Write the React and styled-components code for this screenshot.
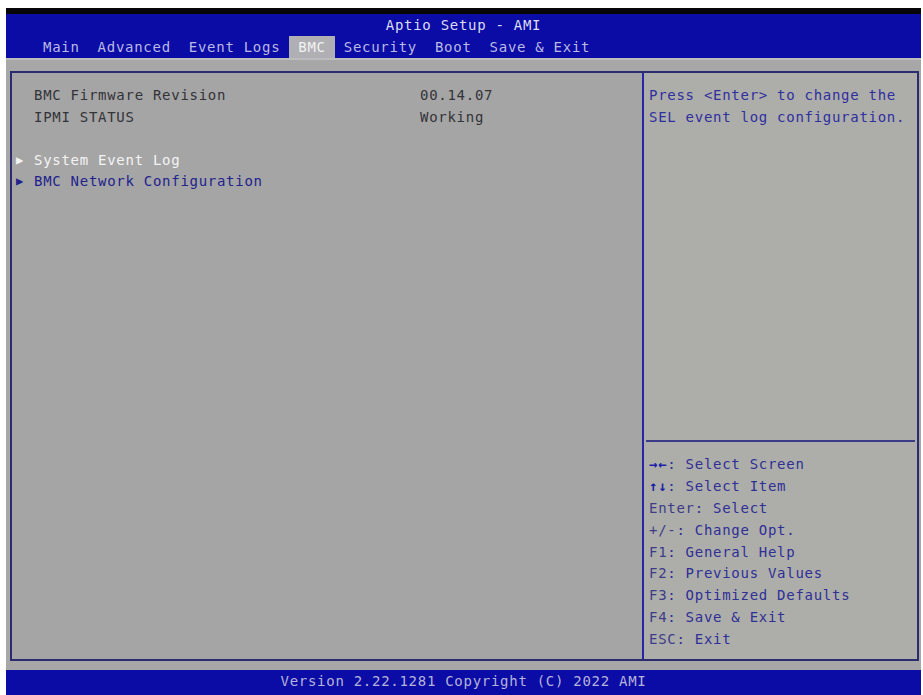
import React from "react";
import styled, { createGlobalStyle } from "styled-components";

const Global = createGlobalStyle`
  html, body { margin: 0; padding: 0; background: #ffffff; }
  body { width: 923px; height: 695px; overflow: hidden; }
  #root { width: 923px; height: 695px; }
`;

const Screen = styled.div`
  box-sizing: border-box;
  width: 923px;
  height: 695px;
  padding: 8px 2px 0 6px;
  display: flex;
  flex-direction: column;
  font-family: "DejaVu Sans Mono", "Liberation Mono", monospace;
  font-size: 14px;
  letter-spacing: 0.72px;
  background: #ffffff;
`;

const TopStrip = styled.div`
  height: 6px;
  background: #060608;
`;

const Header = styled.div`
  height: 44px;
  background: #0b0ba6;
  display: flex;
  flex-direction: column;
  align-items: stretch;
`;

const Title = styled.div`
  height: 22px;
  line-height: 22px;
  text-align: center;
  color: #dcdcf2;
  white-space: pre;
`;

const Tabs = styled.div`
  display: flex;
  height: 22px;
  padding-left: 28px;
  white-space: pre;
`;

const Tab = styled.span`
  height: 22px;
  line-height: 22px;
  padding: 0 9px;
  color: ${(p) => (p.$active ? "#f2f2f2" : "#b9b9e2")};
  background: ${(p) => (p.$active ? "#b0b0b4" : "transparent")};
`;

const Body = styled.div`
  flex: 1;
  background: #a7a7a7;
  padding: 11px 2px 9px 4px;
  display: flex;
  border-top: 2px solid #bcbcbc;
`;

const Panel = styled.div`
  flex: 1;
  display: flex;
  border: 2px solid #2b2b6e;
`;

const Left = styled.div`
  width: 627px;
  background: #a5a5a5;
  padding: 12px 0 0 3px;
  border-right: 2px solid #2626a6;
`;

const Row = styled.div`
  display: grid;
  grid-template-columns: 19px 386px 1fr;
  height: 21.6px;
  line-height: 21.6px;
  white-space: pre;
  color: ${(p) => p.$color || "#333338"};
`;

const Arrow = styled.span`
  font-size: 12px;
  color: ${(p) => p.$color};
  padding-left: 1px;
`;

const Right = styled.div`
  flex: 1;
  display: flex;
  flex-direction: column;
  background: #adadaa;
`;

const HelpTop = styled.div`
  flex: 1;
  padding: 12px 0 0 5px;
  color: #2f2f9e;
`;

const HelpLine = styled.div`
  height: 21.9px;
  line-height: 21.9px;
  white-space: pre;
  color: ${(p) => p.$color || "#2f2f9e"};
`;

const Rule = styled.div`
  height: 2px;
  background: #3a3a86;
  margin: 0 2px 0 2px;
`;

const KeyHelp = styled.div`
  padding: 12px 0 8px 5px;
`;

const Footer = styled.div`
  height: 25px;
  line-height: 23px;
  background: #0b0ba6;
  color: #b4b4d8;
  text-align: center;
  white-space: pre;
`;

const tabs = ["Main", "Advanced", "Event Logs", "BMC", "Security", "Boot", "Save & Exit"];

const keys = [
  ["→←", ": Select Screen"],
  ["↑↓", ": Select Item"],
  ["Enter", ": Select"],
  ["+/-", ": Change Opt."],
  ["F1", ": General Help"],
  ["F2", ": Previous Values"],
  ["F3", ": Optimized Defaults"],
  ["F4", ": Save & Exit"],
  ["ESC", ": Exit"],
];

const KeyName = styled.span`
  color: ${(p) => (p.$strong ? "#1e1ea8" : "#3c3c88")};
  font-weight: ${(p) => (p.$strong ? "bold" : "normal")};
`;

export default function App() {
  return (
    <>
      <Global />
      <Screen>
        <TopStrip />
        <Header>
          <Title>Aptio Setup - AMI</Title>
          <Tabs>
            {tabs.map((t) => (
              <Tab key={t} $active={t === "BMC"}>
                {t}
              </Tab>
            ))}
          </Tabs>
        </Header>
        <Body>
          <Panel>
            <Left>
              <Row>
                <span />
                <span>BMC Firmware Revision</span>
                <span>00.14.07</span>
              </Row>
              <Row>
                <span />
                <span>IPMI STATUS</span>
                <span>Working</span>
              </Row>
              <Row>
                <span />
                <span> </span>
                <span />
              </Row>
              <Row $color="#f4f4f4">
                <Arrow $color="#f4f4f4">▶</Arrow>
                <span>System Event Log</span>
                <span />
              </Row>
              <Row $color="#22228e">
                <Arrow $color="#22228e">▶</Arrow>
                <span>BMC Network Configuration</span>
                <span />
              </Row>
            </Left>
            <Right>
              <HelpTop>
                <HelpLine>Press &lt;Enter&gt; to change the</HelpLine>
                <HelpLine>SEL event log configuration.</HelpLine>
              </HelpTop>
              <Rule />
              <KeyHelp>
                {keys.map(([k, v], i) => (
                  <HelpLine key={k} $color="#2f2f96">
                    <KeyName $strong={i < 2}>{k}</KeyName>
                    {v}
                  </HelpLine>
                ))}
              </KeyHelp>
            </Right>
          </Panel>
        </Body>
        <Footer>Version 2.22.1281 Copyright (C) 2022 AMI</Footer>
      </Screen>
    </>
  );
}
